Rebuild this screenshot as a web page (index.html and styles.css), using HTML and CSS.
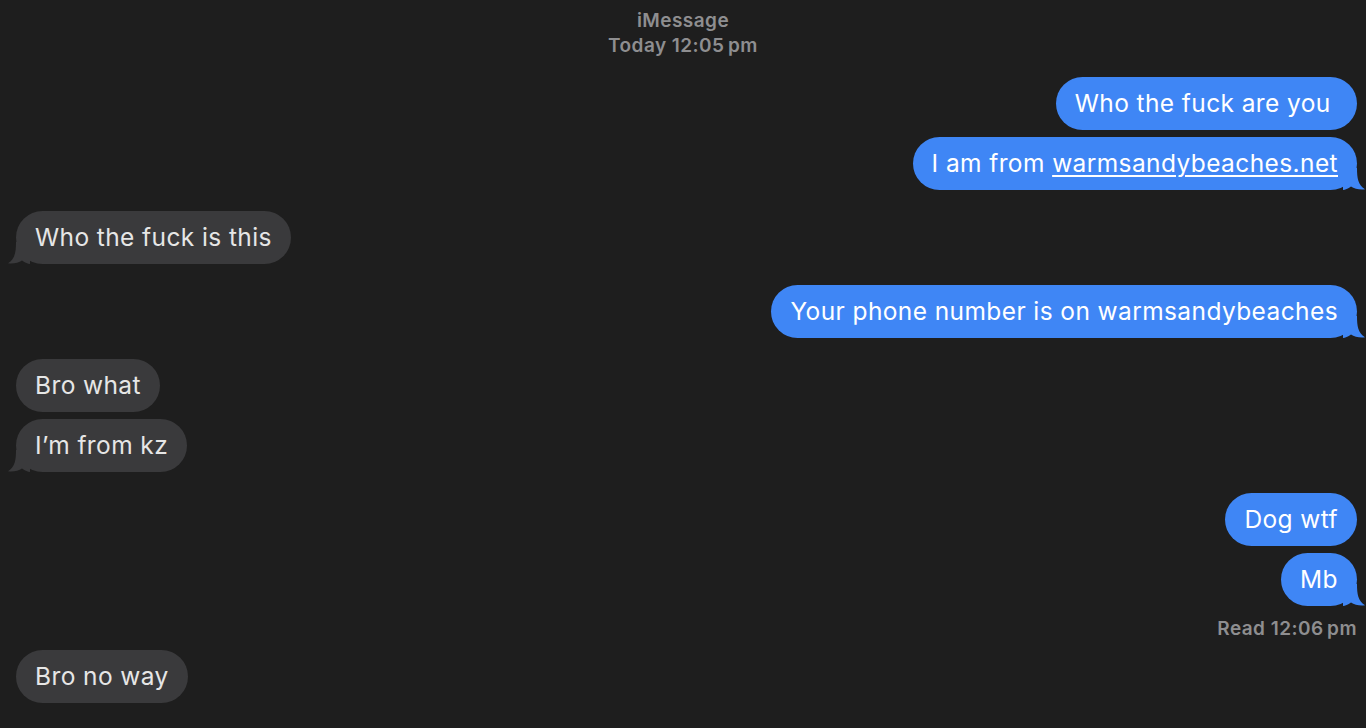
FILE: index.html
```html
<!DOCTYPE html>
<html>
<head>
<meta charset="utf-8">
<link rel="stylesheet" href="styles.css">
</head>
<body>
<div class="header">
  <div class="service">iMessage</div>
  <div class="time">Today 12:05&#8201;pm</div>
</div>
<div class="thread">
  <div class="group sent">
    <div class="bubble">Who the fuck are you&nbsp;</div>
    <div class="bubble tail">I am from <span class="link">warmsandybeaches.net</span></div>
  </div>
  <div class="group recv">
    <div class="bubble tail">Who the fuck is this</div>
  </div>
  <div class="group sent">
    <div class="bubble tail">Your phone number is on warmsandybeaches</div>
  </div>
  <div class="group recv">
    <div class="bubble">Bro what</div>
    <div class="bubble tail">I’m from kz</div>
  </div>
  <div class="group sent">
    <div class="bubble">Dog wtf</div>
    <div class="bubble tail">Mb</div>
    <div class="receipt">Read 12:06&#8201;pm</div>
  </div>
  <div class="group recv last">
    <div class="bubble">Bro no way</div>
  </div>
</div>
</body>
</html>
```
FILE: styles.css
```css
html, body {
  margin: 0;
  padding: 0;
  background: #1e1e1e;
  height: 100%;
  overflow: hidden;
}
body {
  font-family: Inter, "Noto Sans", sans-serif;
}
.header {
  padding-top: 8px;
  text-align: center;
  color: #8e8e90;
  font-size: 19px;
  font-weight: 600;
  letter-spacing: 0.45px;
  line-height: 25px;
}
.thread {
  display: flex;
  flex-direction: column;
  padding: 19px 9px 0 16px;
}
.group {
  display: flex;
  flex-direction: column;
  gap: 7px;
  margin-bottom: 21px;
}
.group.sent { align-items: flex-end; }
.group.recv { align-items: flex-start; }
.bubble {
  position: relative;
  font-size: 24.5px;
  line-height: 29px;
  padding: 12px 19px 12px 19px;
  border-radius: 27px;
  letter-spacing: 0.4px;
}
.sent .bubble {
  background: #3f86f5;
  color: #ffffff;
}
.recv .bubble {
  background: #3a3a3c;
  color: #e6e6e6;
}
.link {
  text-decoration: underline;
  text-underline-offset: 3px;
  text-decoration-thickness: 1.5px;
}
.bubble.tail::after {
  content: "";
  position: absolute;
  bottom: 0;
  width: 22px;
  height: 22px;
  background-repeat: no-repeat;
}
.sent .bubble.tail::after {
  right: -8px;
  background-image: url("data:image/svg+xml;utf8,<svg xmlns='http://www.w3.org/2000/svg' width='22' height='22' viewBox='0 0 22 22'><path d='M0 0 L14 0 C14 10 15 17 22 21.3 C17 22 11.5 21 8 18.5 C5 20.5 2 22 0 22 Z' fill='%233f86f5'/></svg>");
}
.recv .bubble.tail::after {
  left: -8px;
  background-image: url("data:image/svg+xml;utf8,<svg xmlns='http://www.w3.org/2000/svg' width='22' height='22' viewBox='0 0 22 22'><path d='M22 0 L8 0 C8 10 7 17 0 21.3 C5 22 10.5 21 14 18.5 C17 20.5 20 22 22 22 Z' fill='%233a3a3c'/></svg>");
}
.receipt {
  margin-top: 5px;
  margin-bottom: -11px;
  color: #8e8e90;
  font-size: 19px;
  font-weight: 600;
  letter-spacing: 0.45px;
  line-height: 22px;
}
```
